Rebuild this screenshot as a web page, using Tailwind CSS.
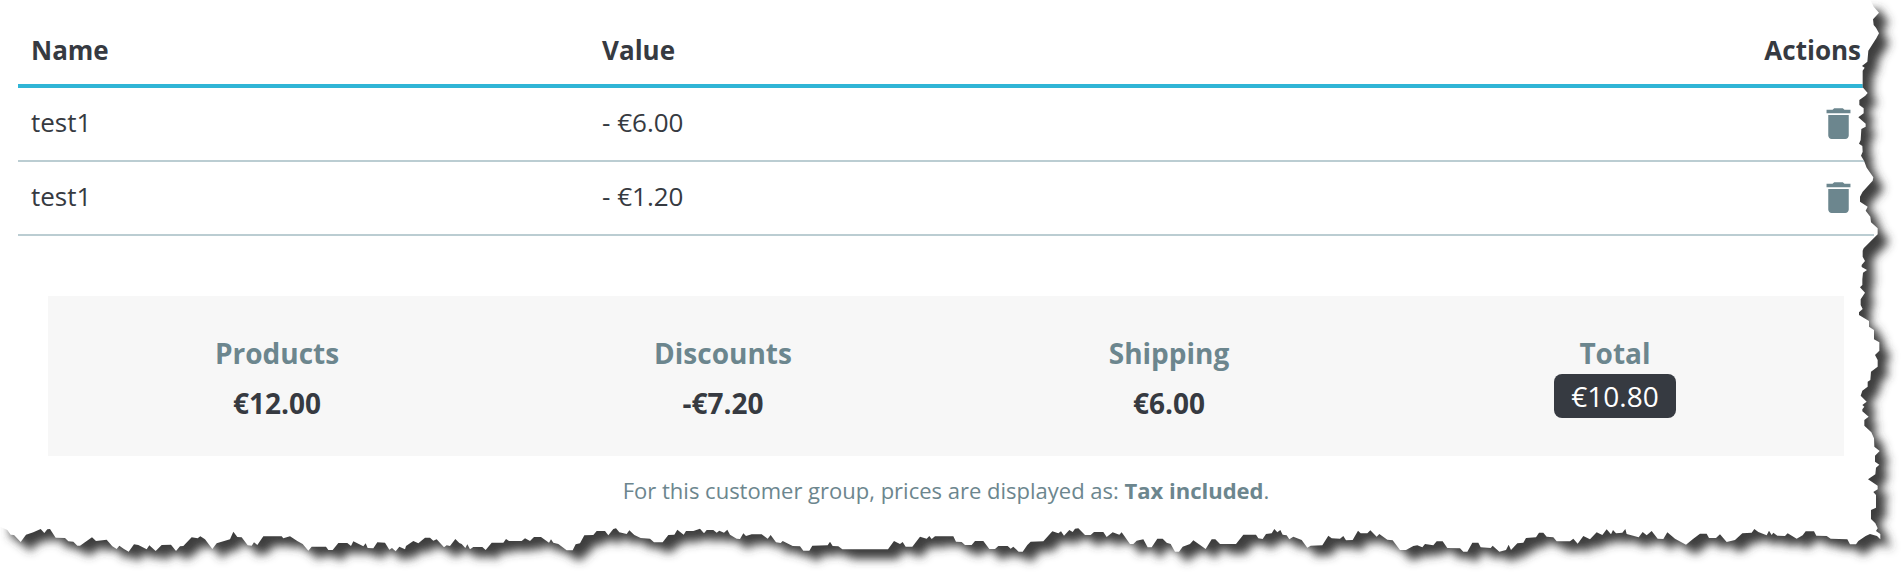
<!DOCTYPE html>
<html lang="en">
<head>
    <meta charset="UTF-8">
    <meta name="viewport" content="width=device-width, initial-scale=1.0">
    <title>Order discounts</title>
    <script src="https://cdn.jsdelivr.net/npm/@tailwindcss/browser@4"></script>
</head>
<body class="bg-white text-[#363a41] font-['Open_Sans',sans-serif]">
    <main class="relative min-h-screen overflow-hidden pt-4 pl-[18px] pr-7">
        <!-- Discounts -->
        <table class="w-full table-fixed border-separate border-spacing-0 text-[26px] leading-10">
            <thead>
                <tr class="text-left">
                    <th class="w-4/13 border-b-4 border-[#30b5d6] px-[13px] py-[14px] font-bold">Name</th>
                    <th class="border-b-4 border-[#30b5d6] px-[13px] py-[14px] font-bold">Value</th>
                    <th class="w-4/13 border-b-4 border-[#30b5d6] px-[13px] py-[14px] text-right font-bold">Actions</th>
                </tr>
            </thead>
            <tbody>
                <tr>
                    <td class="border-b-2 border-[#bbcdd2] px-[13px] pt-[14px] pb-[18px]">test1</td>
                    <td class="border-b-2 border-[#bbcdd2] px-[13px] pt-[14px] pb-[18px]">- €6.00</td>
                    <td class="border-b-2 border-[#bbcdd2] px-[15px] pb-0.5">
                        <button type="button" aria-label="Delete" class="ml-auto block text-[#6c868e]">
                            <svg class="size-[41px]" viewBox="0 0 24 24" fill="currentColor"><path d="M6 19c0 1.1.9 2 2 2h8c1.1 0 2-.9 2-2V7H6v12zM19 4h-3.5l-1-1h-5l-1 1H5v2h14V4z"/></svg>
                        </button>
                    </td>
                </tr>
                <tr>
                    <td class="border-b-2 border-[#bbcdd2] px-[13px] pt-[14px] pb-[18px]">test1</td>
                    <td class="border-b-2 border-[#bbcdd2] px-[13px] pt-[14px] pb-[18px]">- €1.20</td>
                    <td class="border-b-2 border-[#bbcdd2] px-[15px] pb-0.5">
                        <button type="button" aria-label="Delete" class="ml-auto block text-[#6c868e]">
                            <svg class="size-[41px]" viewBox="0 0 24 24" fill="currentColor"><path d="M6 19c0 1.1.9 2 2 2h8c1.1 0 2-.9 2-2V7H6v12zM19 4h-3.5l-1-1h-5l-1 1H5v2h14V4z"/></svg>
                        </button>
                    </td>
                </tr>
            </tbody>
        </table>

        <!-- Totals -->
        <section class="mx-[30px] mt-[60px] grid grid-cols-4 bg-[#f7f7f7] px-1.5 pt-9 pb-8 text-center text-[28px] leading-[42px]">
            <div>
                <p class="font-bold text-[#6c868e]">Products</p>
                <p class="mt-2 font-bold">€12.00</p>
            </div>
            <div>
                <p class="font-bold text-[#6c868e]">Discounts</p>
                <p class="mt-2 font-bold">-€7.20</p>
            </div>
            <div>
                <p class="font-bold text-[#6c868e]">Shipping</p>
                <p class="mt-2 font-bold">€6.00</p>
            </div>
            <div>
                <p class="font-bold text-[#6c868e]">Total</p>
                <p class="mx-auto w-fit rounded-lg bg-[#363a41] px-[17px] py-px text-white">€10.80</p>
            </div>
        </section>
        <p class="mt-4 text-center text-[22px] leading-9 text-[#6c868e]">For this customer group, prices are displayed as: <strong class="font-bold">Tax included</strong>.</p>

        <!-- Torn paper edge -->
        <svg class="pointer-events-none absolute inset-0 size-full" viewBox="0 0 5706 1716" preserveAspectRatio="none" aria-hidden="true">
            <defs>
                <clipPath id="outside"><path id="outside-shape" clip-rule="evenodd"/></clipPath>
                <filter id="soft" filterUnits="userSpaceOnUse" x="-100" y="-100" width="5906" height="1916"><feGaussianBlur stdDeviation="15"/></filter>
            </defs>
            <g clip-path="url(#outside)">
                <rect width="5706" height="1716" fill="#fff"/>
                <g transform="translate(30 29)"><path id="paper-shadow" fill="#3c3c3c" filter="url(#soft)"/></g>
            </g>
        </svg>
    </main>

    <script>
        // The tear runs down the right side, then back along the bottom
        const tear = [
            { x: 5226, y: 0, points: '385,0 395,20 411,38 393,58 395,75 402,83 411,100 403,115 390,135 379,152 376,185 360,198 368,203 362,212 362,262 377,279 370,287 352,300 352,315 365,325 365,340 349,352 371,371 371,380 358,387 356,420 351,431 361,438 362,455 357,467 366,482 374,503 394,532 392,542 362,575 354,590 354,605 377,620 371,632 385,650 387,667 407,685 407,703 365,745 362,752 362,770 369,783 359,795 359,801 375,810 363,818 361,838' },
            { x: 5226, y: 840, points: '361,15 354,22 369,38 356,58 356,75 362,87 351,97 351,105 381,123 381,140 396,150 396,178 412,187 412,212 399,225 407,240 407,260 387,275 385,300 377,305 377,320 361,332 356,347 374,365 361,375 367,380 361,388 361,394 380,410 367,420 367,437 388,457 396,475 397,500 413,513 399,527 399,545 412,554 402,563 400,583 378,598 407,617 407,628 394,636 402,645 402,683 387,690 387,717 400,730 407,745 402,753 415,762 415,778 405,768' },
            { x: 4230, y: 1530, points: '1380,72 1367,78 1345,93 1338,103 1320,103 1312,88 1262,86 1250,78 1219,77 1212,64 1187,64 1178,76 1160,86 1133,70 1125,78 1102,77 1090,68 1085,75 1077,62 1070,76 1045,66 1033,57 1025,68 997,70 975,90 950,96 930,73 918,84 897,84 890,71 870,71 848,88 828,104 795,86 772,67 760,87 743,86 725,63 710,76 698,66 686,82 650,72 646,57 637,68 618,70 609,60 603,73 590,58 577,75 560,67 540,88 520,78 503,101 490,86 480,94 440,94 430,82 410,80 400,68 387,68 378,82 348,84 340,98 322,100 303,120 296,104 288,120 268,125 248,107 242,114 212,112 205,98 187,98 172,125 160,125 150,115 112,114 98,94 80,94 70,106 45,102 37,112 22,106 10,108' },
            { x: 2820, y: 1530, points: '1398,120 1380,120 1358,91 1342,89 1318,72 1310,80 1291,61 1282,70 1262,70 1254,62 1238,90 1218,91 1210,78 1200,86 1175,85 1165,77 1147,106 1112,107 1102,113 1085,90 1060,80 1048,88 1040,76 1028,74 1021,60 1012,67 1003,57 995,70 978,72 968,87 955,85 948,74 910,74 888,102 840,102 826,88 815,88 797,117 760,91 750,102 728,110 717,125 705,125 692,102 680,98 668,86 652,86 635,112 623,112 610,88 590,92 580,102 570,102 545,67 538,74 518,67 500,81 490,66 462,66 452,75 435,75 415,55 405,56 398,66 388,60 372,77 363,64 355,70 337,64 310,94 272,95 262,105 248,125 236,125 220,110 212,116 203,108 175,108 165,117 148,117 130,93 105,93 95,105 75,105 65,96 48,95 40,79 0,79' },
            { x: 1410, y: 1530, points: '1395,79 1385,87 1378,78 1370,86 1350,80 1327,110 1307,110 1298,96 1290,102 1272,93 1254,118 1117,118 1105,109 1088,108 1080,95 1073,106 1027,107 1018,122 1000,122 990,109 968,108 938,93 932,99 918,97 902,75 893,86 875,73 845,73 828,78 820,70 810,87 800,86 780,74 772,59 762,68 748,62 740,68 730,60 710,60 702,70 690,56 670,63 648,63 641,74 622,59 613,74 595,75 578,97 552,97 540,86 512,84 493,75 478,61 470,72 448,67 438,55 430,57 415,76 405,63 380,63 370,75 343,76 330,100 317,103 308,121 290,121 265,102 250,98 243,88 237,98 213,81 192,81 180,93 165,85 155,93 117,93 108,87 100,98 65,98 47,120 37,111 10,111 0,118' },
            { x: 0, y: 1530, points: '1402,103 1396,114 1385,102 1378,99 1366,87 1350,108 1340,106 1332,112 1310,88 1300,92 1290,83 1275,83 1255,100 1240,93 1218,108 1215,118 1198,110 1187,124 1176,114 1168,119 1155,98 1132,97 1120,115 1103,114 1097,100 1090,109 1060,94 1053,108 1042,99 1015,99 998,120 985,120 978,110 935,110 925,122 908,102 893,94 870,79 850,85 845,79 790,79 772,105 762,97 755,107 743,106 725,82 712,81 700,65 690,88 650,100 637,117 615,88 601,79 593,85 575,82 550,108 540,109 528,123 513,104 485,105 467,123 448,106 440,118 415,105 402,103 386,125 372,117 358,107 350,117 337,109 320,89 288,93 276,82 240,107 232,107 220,95 205,94 195,84 167,83 150,57 142,58 133,69 122,57 100,67 78,74 62,96 42,75 32,74 22,60 0,50' }
        ];

        const points = tear.flatMap(part => part.points.split(' ').map(pair => {
            const [x, y] = pair.split(',').map(Number);
            return `${x + part.x} ${y + part.y}`;
        }));
        const paper = `M0 0L${points.join('L')}Z`;

        document.getElementById('paper-shadow').setAttribute('d', paper);
        document.getElementById('outside-shape').setAttribute('d', `M0 0H5706V1716H0Z${paper}`);
    </script>
</body>
</html>
